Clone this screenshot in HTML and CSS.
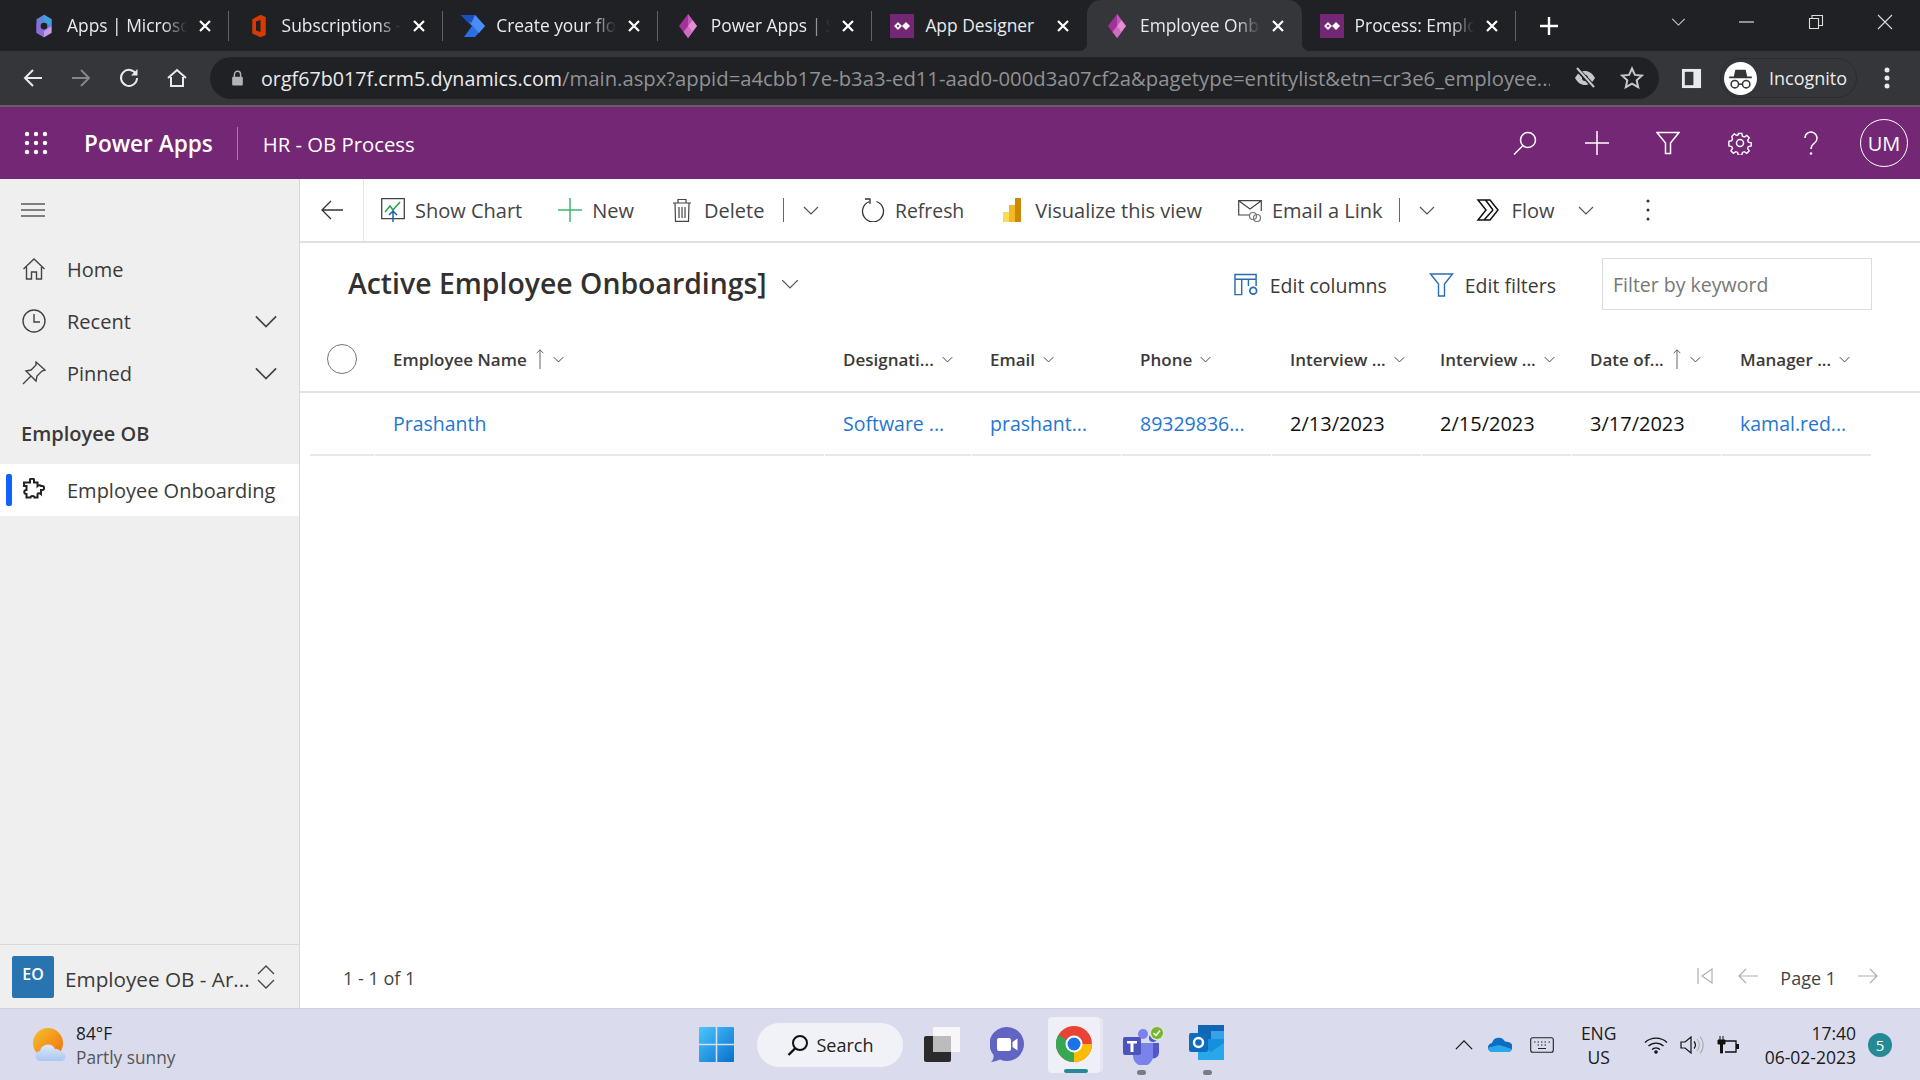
FILE: index.html
```html
<!DOCTYPE html>
<html lang="en">

<head>
    <meta charset="UTF-8">
    <title>Employee Onboarding</title>
    <link rel="stylesheet" href="styles.css">
</head>

<body>
    <svg class="sprite" aria-hidden="true">
        <symbol id="chev" viewBox="0 0 16 9"><path d="M1 1l7 7 7-7" fill="none" stroke="currentColor" stroke-width="1.2"/></symbol>
        <symbol id="tabx" viewBox="0 0 14 14"><path d="M2 2l10 10M12 2L2 12" stroke="currentColor" stroke-width="2.2"/></symbol>
        <symbol id="pa" viewBox="0 0 24 32"><path d="M12 0l12 16-12 16L0 16z" fill="#a4309a"/><path d="M12 0l6 8-6 8z" fill="#c25ab5"/><path d="M12 16l6-8 6 8-12 16z" fill="#e58fd0"/><path d="M12 16l6 8-6 8-6-8z" fill="#d06cc0"/></symbol>
        <symbol id="designer" viewBox="0 0 24 24"><rect width="24" height="24" fill="#742774"/><path d="M8 8l4 4-4 4-4-4zM16 8l4 4-4 4-4-4z" fill="#fff"/><path d="M8 10.5L9.500 12 8 13.500 6.500 12z" fill="#742774"/></symbol>
    </svg>

    <!-- browser tabs -->
    <div class="tabstrip">
        <div class="tab">
            <svg class="favicon" viewBox="0 0 24 32"><path d="M12 1l10 6v18l-10 6-10-6V7z" fill="#6a7fd6"/><path d="M12 1l10 6v9L12 10z" fill="#3aa0e0"/><path d="M2 25V12l10 6v13z" fill="#8d6cd8"/><path d="M22 16v9l-10 6v-8z" fill="#c69be8"/><circle cx="12" cy="16" r="4.500" fill="#202124"/></svg>
            <span class="tab-title">Apps | Microsoft 365</span>
            <svg class="tab-close"><use href="#tabx"/></svg>
        </div>
        <div class="tab">
            <svg class="favicon" viewBox="0 0 20 32"><path d="M1 7l11-6 7 3v24l-7 3-11-5z" fill="#d83b01"/><path d="M6 10l6-2v16l-6-2z" fill="#202124"/></svg>
            <span class="tab-title">Subscriptions - Microsoft</span>
            <svg class="tab-close"><use href="#tabx"/></svg>
        </div>
        <div class="tab">
            <svg class="favicon" viewBox="0 0 24 22"><path d="M0 0h14l10 11-10 11H3l8-11z" fill="#2a6ee8"/><path d="M0 0h14l6 7H6z" fill="#1a4fc0"/><path d="M14 0l10 11-6 7-8-9z" fill="#4c8df5"/></svg>
            <span class="tab-title">Create your flow</span>
            <svg class="tab-close"><use href="#tabx"/></svg>
        </div>
        <div class="tab">
            <svg class="favicon"><use href="#pa"/></svg>
            <span class="tab-title">Power Apps | Sign in</span>
            <svg class="tab-close"><use href="#tabx"/></svg>
        </div>
        <div class="tab tab-before-active">
            <svg class="favicon"><use href="#designer"/></svg>
            <span class="tab-title no-fade">App Designer</span>
            <svg class="tab-close"><use href="#tabx"/></svg>
        </div>
        <div class="tab tab-active">
            <svg class="favicon"><use href="#pa"/></svg>
            <span class="tab-title">Employee Onboarding</span>
            <svg class="tab-close"><use href="#tabx"/></svg>
        </div>
        <div class="tab">
            <svg class="favicon"><use href="#designer"/></svg>
            <span class="tab-title">Process: Employee</span>
            <svg class="tab-close"><use href="#tabx"/></svg>
        </div>
        <svg class="new-tab" viewBox="0 0 18 18"><path d="M9 0v18M0 9h18" stroke="#fff" stroke-width="2.400"/></svg>
        <div class="window-btns">
            <svg class="win-chev"><use href="#chev"/></svg>
            <svg class="win-btn" viewBox="0 0 16 16"><path d="M0 8h15" stroke="#ddd" stroke-width="1.200"/></svg>
            <svg class="win-btn" viewBox="0 0 16 16"><path d="M1.500 4.500h9v10h-9zM4 4.500V1.500h10.500v10h-4" fill="none" stroke="#ddd" stroke-width="1.100"/></svg>
            <svg class="win-btn" viewBox="0 0 16 16"><path d="M1 1l14 14M15 1L1 15" stroke="#ddd" stroke-width="1.100"/></svg>
        </div>
    </div>

    <!-- browser toolbar -->
    <div class="toolbar">
        <svg class="nav-btn" viewBox="0 0 20 20"><path d="M19 10H2M10 2l-8 8 8 8" fill="none" stroke="#e8eaed" stroke-width="2"/></svg>
        <svg class="nav-btn" viewBox="0 0 20 20"><path d="M1 10h17M10 2l8 8-8 8" fill="none" stroke="#83868a" stroke-width="2"/></svg>
        <svg class="nav-btn" viewBox="0 0 20 20"><path d="M17 6a8 8 0 1 0 1 4" fill="none" stroke="#e8eaed" stroke-width="2"/><path d="M18.500 1v6.500H12z" fill="#e8eaed"/></svg>
        <svg class="nav-btn" viewBox="0 0 20 20"><path d="M1 10l9-8 9 8M4 9v9h12V9" fill="none" stroke="#e8eaed" stroke-width="2"/></svg>
        <div class="omnibox">
            <svg class="lock" viewBox="0 0 14 18"><path d="M3.500 8V5a3.500 3.500 0 0 1 7 0v3" fill="none" stroke="#b0b3b8" stroke-width="1.600"/><rect x="1" y="7.500" width="12" height="10" rx="1.500" fill="#b0b3b8"/></svg>
            <span class="url"><span class="url-host">orgf67b017f.crm5.dynamics.com</span>/main.aspx?appid=a4cbb17e-b3a3-ed11-aad0-000d3a07cf2a&amp;pagetype=entitylist&amp;etn=cr3e6_employee...</span>
            <svg class="omni-icon" viewBox="0 0 24 22"><path d="M2 11c3-5 6-7 10-7s7 2 10 7c-3 5-6 7-10 7s-7-2-10-7z" fill="#c4c7cb"/><circle cx="12" cy="11" r="3" fill="#202124"/><path d="M4 2l17 18" stroke="#202124" stroke-width="4.500"/><path d="M4 1l17 19" stroke="#c4c7cb" stroke-width="2"/></svg>
            <svg class="omni-icon" viewBox="0 0 24 24"><path d="M12 2.500l2.900 6.400 7 .7-5.200 4.700 1.500 6.900-6.200-3.600-6.200 3.600 1.500-6.900-5.200-4.700 7-.7z" fill="none" stroke="#c4c7cb" stroke-width="2"/></svg>
        </div>
        <svg class="side-panel" viewBox="0 0 22 22"><rect x="1" y="1" width="20" height="20" fill="#e8eaed"/><rect x="4" y="4" width="9" height="14" fill="#35363a"/></svg>
        <div class="incognito">
            <span class="incognito-face">
                <svg viewBox="0 0 32 32"><path d="M9.500 14l1.500-6.500h10l1.500 6.500zM5 14h22v1.800H5z" fill="#35363a"/><circle cx="10.500" cy="21.500" r="3.600" fill="none" stroke="#35363a" stroke-width="1.500"/><circle cx="21.500" cy="21.500" r="3.600" fill="none" stroke="#35363a" stroke-width="1.500"/><path d="M14 21.500h4" stroke="#35363a" stroke-width="1.500"/></svg>
            </span>
            Incognito
        </div>
        <svg class="menu-dots" viewBox="0 0 6 24"><circle cx="3" cy="4" r="2.500" fill="#e8eaed"/><circle cx="3" cy="12" r="2.500" fill="#e8eaed"/><circle cx="3" cy="20" r="2.500" fill="#e8eaed"/></svg>
    </div>

    <!-- app header -->
    <header class="app-bar">
        <svg class="waffle" viewBox="0 0 24 24"><g fill="#fff"><circle cx="3" cy="3" r="2.200"/><circle cx="12" cy="3" r="2.200"/><circle cx="21" cy="3" r="2.200"/><circle cx="3" cy="12" r="2.200"/><circle cx="12" cy="12" r="2.200"/><circle cx="21" cy="12" r="2.200"/><circle cx="3" cy="21" r="2.200"/><circle cx="12" cy="21" r="2.200"/><circle cx="21" cy="21" r="2.200"/></g></svg>
        <span class="brand">Power Apps</span>
        <span class="app-name">HR - OB Process</span>
        <div class="app-actions">
            <button class="app-btn"><svg viewBox="0 0 24 24"><circle cx="15" cy="9" r="7.500" fill="none" stroke="#fff" stroke-width="1.500"/><path d="M10 14.500L1 23.500" stroke="#fff" stroke-width="1.500"/></svg></button>
            <button class="app-btn"><svg viewBox="0 0 24 24"><path d="M12 0v24M0 12h24" stroke="#fff" stroke-width="1.500"/></svg></button>
            <button class="app-btn"><svg viewBox="0 0 24 24"><path d="M1 1.500h22L14.500 12v10.500h-5V12z" fill="none" stroke="#fff" stroke-width="1.500"/></svg></button>
            <button class="app-btn"><svg viewBox="0 0 24 24"><circle cx="12" cy="12" r="3.500" fill="none" stroke="#fff" stroke-width="1.500"/><path d="M10 1h4l.7 3.200 2.100.9 2.800-1.800 2.800 2.800-1.800 2.800.9 2.100 3.200.7v3.500l-3.200.7-.9 2.100 1.800 2.800-2.800 2.800-2.800-1.800-2.100.9-.7 3.200h-4l-.7-3.200-2.100-.9-2.800 1.800-2.800-2.800 1.800-2.800-.9-2.100-3.200-.7V10l3.200-.7.900-2.100L2.600 4.400l2.800-2.800 2.800 1.800 2.100-.9z" transform="translate(1.500 1.500) scale(.88)" fill="none" stroke="#fff" stroke-width="1.600"/></svg></button>
            <button class="app-btn"><svg viewBox="0 0 24 24"><path d="M6 7a6 6 0 1 1 9.500 5c-2 1.400-3.500 2.500-3.500 6" fill="none" stroke="#fff" stroke-width="1.500"/><circle cx="12" cy="22.500" r="1.200" fill="#fff"/></svg></button>
            <span class="avatar">UM</span>
        </div>
    </header>

    <div class="workspace">
        <!-- left navigation -->
        <nav class="sidebar">
            <svg class="hamburger" viewBox="0 0 24 14"><path d="M0 1h24M0 7h24M0 13h24" stroke="#111" stroke-width="1.200"/></svg>
            <ul class="nav-list">
                <li class="nav-item">
                    <svg class="nav-icon" viewBox="0 0 24 24"><path d="M1.500 12L12 2l10.500 10M4.500 10v12h5v-7h5v7h5V10" fill="none" stroke="#444" stroke-width="1.400"/></svg>
                    <span>Home</span>
                </li>
                <li class="nav-item">
                    <svg class="nav-icon" viewBox="0 0 24 24"><circle cx="12" cy="12" r="11" fill="none" stroke="#444" stroke-width="1.400"/><path d="M12 5v8h6" fill="none" stroke="#444" stroke-width="1.400"/></svg>
                    <span>Recent</span>
                    <svg class="nav-chev"><use href="#chev"/></svg>
                </li>
                <li class="nav-item">
                    <svg class="nav-icon" viewBox="0 0 24 24"><path d="M14 1l9 8-3 1-5 5-1 5-3-3-4-4-3-3 5-1 5-5zM8.500 15.500L1 23" fill="none" stroke="#444" stroke-width="1.400"/></svg>
                    <span>Pinned</span>
                    <svg class="nav-chev"><use href="#chev"/></svg>
                </li>
            </ul>
            <div class="nav-group">Employee OB</div>
            <div class="nav-item nav-current">
                <svg class="nav-icon" viewBox="0 0 24 24"><path d="M8 1.500c0-1 4-1 4 0V4.500h3.500V8h0c1-1 3-1 3.500 0h1.500c2 0 2 4 0 4h-1.500V16c-1-1-3.500-1-3.500 0v3.500h-3c0-2-4-2-4 0H4.500V16c-3 0-3-4 0-4V8H2V4.500h6z" fill="none" stroke="#222" stroke-width="2"/></svg>
                <span>Employee Onboarding</span>
            </div>
            <div class="area-switch">
                <span class="area-tile">EO</span>
                <span class="area-name">Employee OB - Ar...</span>
                <svg class="area-chev" viewBox="0 0 18 26"><path d="M1 10l8-8 8 8M1 16l8 8 8-8" fill="none" stroke="#444" stroke-width="1.300"/></svg>
            </div>
        </nav>

        <main class="content">
            <!-- command bar -->
            <div class="cmdbar">
                <button class="cmd-back"><svg viewBox="0 0 22 20"><path d="M22 10H1M10 1l-9 9 9 9" fill="none" stroke="#333" stroke-width="1.300"/></svg></button>
                <div class="cmd-list">
                    <span class="cmd">
                        <svg class="cmd-icon" viewBox="0 0 24 24"><path d="M.7 .7h22.600v20H.7z" fill="none" stroke="#444" stroke-width="1.300"/><path d="M4 14l5-6 3 4 7-8" fill="none" stroke="#2aa34a" stroke-width="1.500"/><path d="M12 24V13M8 17l4-4 4 4" fill="none" stroke="#1565b0" stroke-width="1.500"/></svg>
                        Show Chart
                    </span>
                    <span class="cmd">
                        <svg class="cmd-icon" viewBox="0 0 24 24"><path d="M12 0v24M0 12h24" stroke="#3fb56e" stroke-width="1.500"/></svg>
                        New
                    </span>
                    <span class="cmd cmd-delete">
                        <svg class="cmd-icon" viewBox="0 0 24 24"><path d="M3 5h18M8 5V1.500h8V5M5 5l.5 18.300h13L19 5M9 9v11M12 9v11M15 9v11" fill="none" stroke="#444" stroke-width="1.200"/></svg>
                        Delete
                    </span>
                    <span class="cmd-split"><svg class="cmd-chev"><use href="#chev"/></svg></span>
                    <span class="cmd cmd-refresh">
                        <svg class="cmd-icon" viewBox="0 0 24 24"><path d="M15.500 3.500a10.500 10.500 0 1 1-7 0" fill="none" stroke="#333" stroke-width="1.300"/><path d="M4 1h5v5" fill="none" stroke="#333" stroke-width="1.300"/></svg>
                        Refresh
                    </span>
                    <span class="cmd">
                        <svg class="cmd-icon cmd-icon-bi" viewBox="0 0 18 24"><rect x="0" y="14" width="6" height="10" fill="#f6dd58"/><rect x="6" y="7" width="6" height="17" fill="#f2b922"/><rect x="12" y="0" width="6" height="24" fill="#c98a0a"/></svg>
                        Visualize this view
                    </span>
                    <span class="cmd cmd-email">
                        <svg class="cmd-icon" viewBox="0 0 24 24"><path d="M12 17H.7V2.700h22.600V13M.7 2.700L12 11l11.300-8.300" fill="none" stroke="#444" stroke-width="1.200"/><circle cx="15" cy="18" r="3.500" fill="none" stroke="#777" stroke-width="1.200"/><circle cx="19" cy="20" r="3.500" fill="none" stroke="#777" stroke-width="1.200"/></svg>
                        Email a Link
                    </span>
                    <span class="cmd-split cmd-split-last"><svg class="cmd-chev"><use href="#chev"/></svg></span>
                    <span class="cmd cmd-flow">
                        <svg class="cmd-icon" viewBox="0 0 24 24"><path d="M2 2h12l8 10-8 10H2l8-10zM8 22l9-10M9.500 2l7.500 10" fill="none" stroke="#111" stroke-width="1.500"/></svg>
                        Flow
                        <svg class="cmd-chev flow-chev"><use href="#chev"/></svg>
                    </span>
                    <svg class="cmd-more" viewBox="0 0 4 24"><circle cx="2" cy="3" r="1.500" fill="#333"/><circle cx="2" cy="12" r="1.500" fill="#333"/><circle cx="2" cy="21" r="1.500" fill="#333"/></svg>
                </div>
            </div>

            <!-- view title -->
            <div class="view-bar">
                <h1 class="view-title">Active Employee Onboardings]</h1>
                <svg class="view-chev"><use href="#chev"/></svg>
                <span class="view-action view-columns">
                    <svg class="view-icon" viewBox="0 0 26 24"><path d="M1 17V1h22v12M1 6h22M8 6v16H1v-5M15 6v7" fill="none" stroke="#2b6cb0" stroke-width="1.500"/><circle cx="20" cy="18" r="3.500" fill="none" stroke="#2b6cb0" stroke-width="1.800"/></svg>
                    Edit columns
                </span>
                <span class="view-action">
                    <svg class="view-icon" viewBox="0 0 24 24"><path d="M1 1h22l-8 10v12H9V11z" fill="none" stroke="#2b6cb0" stroke-width="1.400"/></svg>
                    Edit filters
                </span>
                <div class="keyword">Filter by keyword</div>
            </div>

            <!-- grid -->
            <div class="grid grid-head">
                <span class="pick"></span>
                <span class="col">Employee Name <svg class="sort" viewBox="0 0 10 24"><path d="M5 24V1M1 5l4-4 4 4" fill="none" stroke="#555" stroke-width="1.100"/></svg><svg class="col-chev"><use href="#chev"/></svg></span>
                <span class="col">Designati... <svg class="col-chev"><use href="#chev"/></svg></span>
                <span class="col">Email <svg class="col-chev"><use href="#chev"/></svg></span>
                <span class="col">Phone <svg class="col-chev"><use href="#chev"/></svg></span>
                <span class="col">Interview ... <svg class="col-chev"><use href="#chev"/></svg></span>
                <span class="col">Interview ... <svg class="col-chev"><use href="#chev"/></svg></span>
                <span class="col">Date of... <svg class="sort" viewBox="0 0 10 24"><path d="M5 24V1M1 5l4-4 4 4" fill="none" stroke="#555" stroke-width="1.100"/></svg><svg class="col-chev"><use href="#chev"/></svg></span>
                <span class="col">Manager ... <svg class="col-chev"><use href="#chev"/></svg></span>
            </div>
            <div class="grid grid-row">
                <span class="cell"></span>
                <a class="cell link">Prashanth</a>
                <a class="cell link">Software ...</a>
                <a class="cell link">prashant...</a>
                <a class="cell link">89329836...</a>
                <span class="cell">2/13/2023</span>
                <span class="cell">2/15/2023</span>
                <span class="cell">3/17/2023</span>
                <a class="cell link">kamal.red...</a>
            </div>

            <!-- footer -->
            <div class="list-foot">
                <span class="count">1 - 1 of 1</span>
                <div class="pager">
                    <svg class="pager-first" viewBox="0 0 16 16"><path d="M1 0v16M15 1v14L5 8z" fill="none" stroke="#b0b0b0" stroke-width="1.200"/></svg>
                    <svg class="pager-arrow" viewBox="0 0 20 16"><path d="M20 8H1M8 1L1 8l7 7" fill="none" stroke="#b0b0b0" stroke-width="1.200"/></svg>
                    <span class="page-label">Page 1</span>
                    <svg class="pager-arrow" viewBox="0 0 20 16"><path d="M0 8h19M12 1l7 7-7 7" fill="none" stroke="#b0b0b0" stroke-width="1.200"/></svg>
                </div>
            </div>
        </main>
    </div>

    <!-- windows taskbar -->
    <footer class="taskbar">
        <div class="weather">
            <svg class="weather-icon" viewBox="0 0 34 34">
                <defs>
                    <linearGradient id="sun" x1="0" y1="0" x2="1" y2="1"><stop offset="0" stop-color="#f7c12d"/><stop offset="1" stop-color="#ee6f0c"/></linearGradient>
                    <linearGradient id="cloud" x1="0" y1="0" x2="0" y2="1"><stop offset="0" stop-color="#dfe8fb"/><stop offset="1" stop-color="#a9c6f2"/></linearGradient>
                </defs>
                <circle cx="15" cy="15" r="15" fill="url(#sun)"/>
                <path d="M8 33a5 5 0 0 1-1-10 8 8 0 0 1 15-2 6 6 0 0 1 6 3 4.500 4.500 0 0 1 0 9z" fill="url(#cloud)"/>
            </svg>
            <div class="weather-text">
                <span class="weather-temp">84°F</span>
                <span class="weather-desc">Partly sunny</span>
            </div>
        </div>

        <div class="task-apps">
            <svg class="task-start" viewBox="0 0 35 35">
                <defs><linearGradient id="win" x1="0" y1="0" x2="1" y2="1"><stop offset="0" stop-color="#4cc6fb"/><stop offset="1" stop-color="#0670cf"/></linearGradient></defs>
                <path d="M0 1a1 1 0 0 1 1-1h15.700v16.700H0zM18.300 0H34a1 1 0 0 1 1 1v15.700H18.300zM0 18.300h16.700V35H1a1 1 0 0 1-1-1zM18.300 18.300H35V34a1 1 0 0 1-1 1H18.300z" fill="url(#win)"/>
            </svg>
            <div class="task-search">
                <svg viewBox="0 0 22 22"><circle cx="13" cy="9" r="7" fill="none" stroke="#111" stroke-width="2"/><path d="M8 14.500L1.500 21" stroke="#111" stroke-width="2.400"/></svg>
                Search
            </div>
            <svg class="task-icon task-view" viewBox="0 0 36 36"><rect x="9" y="0" width="27" height="25" rx="1" fill="#f7f7fa"/><rect y="9" width="27" height="26" rx="2" fill="#2b2b2b"/><rect x="9" y="9" width="18" height="16" fill="#bcbcbc"/></svg>
            <svg class="task-icon task-meet" viewBox="0 0 34 36"><path d="M17 0a17 17 0 1 1-7 32.500C7 34 3 35 1 35c2-2 3-4 2.500-7A17 17 0 0 1 17 0z" fill="#6264c4"/><rect x="7" y="11" width="14" height="13" rx="2" fill="#fff"/><path d="M22.500 15l5-3.500v12l-5-3.500z" fill="#fff"/></svg>
            <div class="task-chrome">
                <svg viewBox="0 0 36 36">
                    <circle cx="18" cy="18" r="18" fill="#ea4335"/>
                    <path d="M18 18L2.400 9A18 18 0 0 0 18 36z" fill="#34a853"/>
                    <path d="M18 18h18A18 18 0 0 1 18 36z" fill="#fbbc04"/>
                    <circle cx="18" cy="18" r="8.500" fill="#fff"/>
                    <circle cx="18" cy="18" r="6.500" fill="#1a73e8"/>
                </svg>
                <span class="chrome-mark"></span>
            </div>
            <div class="task-running">
                <svg viewBox="0 0 44 40"><circle cx="20" cy="9" r="5" fill="#7b83eb"/><circle cx="30" cy="13" r="4" fill="#5059c9"/><path d="M25 18h11v10a6 6 0 0 1-8 5z" fill="#5059c9"/><path d="M10 18h20v13a10 10 0 0 1-20 0z" fill="#7b83eb"/><rect y="12" width="18" height="18" rx="2" fill="#4b53bc"/><path d="M4 16h10v2.500h-3.500V27h-3v-8.500H4z" fill="#fff"/><circle cx="34" cy="8" r="7.500" fill="#dfe3d5"/><circle cx="34" cy="8" r="6" fill="#74b72e"/><path d="M30.500 8l2.500 2.500 4-5" fill="none" stroke="#fff" stroke-width="1.500"/></svg>
                <span class="run-dot"></span>
            </div>
            <div class="task-running task-outlook">
                <svg viewBox="0 0 36 36"><rect x="9" y="0" width="26" height="18" fill="#1066b5"/><rect x="22" y="6" width="13" height="12" fill="#35a2ea"/><path d="M9 14h26v20a1 1 0 0 1-1 1H10a1 1 0 0 1-1-1z" fill="#1490df"/><path d="M9 18l13 9 13-9v17H9z" fill="#28a8ea"/><rect y="8" width="19" height="19" rx="2" fill="#0f6cbd"/><circle cx="9.500" cy="17.500" r="4.500" fill="none" stroke="#fff" stroke-width="2.400"/></svg>
                <span class="run-dot"></span>
            </div>
        </div>

        <div class="tray">
            <svg class="tray-caret" viewBox="0 0 20 11"><path d="M1 10l9-9 9 9" fill="none" stroke="#111" stroke-width="1.300"/></svg>
            <svg class="tray-cloud" viewBox="0 0 24 16"><path d="M5 15a4.500 4.500 0 0 1-1-9 7 7 0 0 1 13-1.500 5.500 5.500 0 0 1 3 .500A5 5 0 0 1 19 15z" fill="#0f6cc5"/><path d="M5 15c-3 0-5-2-4.500-4.500L11 8l13 4c-.500 2-2 3-4.500 3z" fill="#28a8ea"/></svg>
            <svg class="tray-keys" viewBox="0 0 24 16"><rect x=".7" y=".7" width="22.600" height="14.600" rx="2" fill="none" stroke="#222" stroke-width="1.100"/><path d="M4 5h1.500M7.500 5H9M11 5h1.500M14.500 5H16M18.500 5H20M7.500 8H9M11 8h1.500M14.500 8H16M8 11.500h8" stroke="#222" stroke-width="1.200"/></svg>
            <div class="tray-lang">ENG<br>US</div>
            <svg class="tray-wifi" viewBox="0 0 24 18"><path d="M1 6.500a16 16 0 0 1 22 0M4.500 10a11 11 0 0 1 15 0M8 13.500a6 6 0 0 1 8 0" fill="none" stroke="#111" stroke-width="1.300"/><circle cx="12" cy="16" r="1.800" fill="#111"/></svg>
            <svg class="tray-sound" viewBox="0 0 24 20"><path d="M1 7h4l6-5v16l-6-5H1z" fill="none" stroke="#111" stroke-width="1.200"/><path d="M14 6.500a5 5 0 0 1 0 7" fill="none" stroke="#111" stroke-width="1.200"/><path d="M17 4a9 9 0 0 1 0 12M20 1.500a13 13 0 0 1 0 17" fill="none" stroke="#aaa" stroke-width="1.100"/></svg>
            <svg class="tray-power" viewBox="0 0 24 18"><path d="M8 5h11v11H8" fill="none" stroke="#111" stroke-width="1.300"/><rect x="19" y="8" width="3" height="5" fill="#111"/><path d="M1 4h7v4H5.500v9H3.500V8H1zM3 0v4M6 0v4" fill="#111" stroke="#111"/></svg>
            <div class="tray-clock">17:40<br>06-02-2023</div>
            <span class="tray-badge">5</span>
        </div>
    </footer>
</body>

</html>
```

FILE: styles.css
```css
/* page */
* {
    box-sizing: border-box;
}

body {
    margin: 0;
    height: 100vh;
    display: flex;
    flex-direction: column;
    overflow: hidden;
    font-family: "Open Sans", "Noto Sans", sans-serif;
    color: #323130;
    background: #fff;
}

.sprite {
    display: none;
}

button {
    border: none;
    background: none;
    padding: 0;
}

/* browser tabs */
.tabstrip {
    height: 51px;
    flex: none;
    display: flex;
    align-items: center;
    padding-left: 14px;
    background: #202124;
    color: #e8eaed;
    font-size: 17.4px;
}

.tab {
    position: relative;
    width: 214.6px;
    height: 100%;
    flex: none;
    display: flex;
    align-items: center;
    padding-left: 18px;
    padding-right: 17px;
}

.tab::after {
    content: "";
    position: absolute;
    right: 0;
    top: 11px;
    height: 30px;
    width: 1px;
    background: #5f6368;
}

.tab-active {
    background: #35363a;
    border-radius: 14px 14px 0 0;
}

.tab-active::before,
.tab-active::after {
    content: "";
    position: absolute;
    top: auto;
    bottom: 0;
    width: 8px;
    height: 8px;
    background: radial-gradient(circle at 0 0, transparent 8px, #35363a 8.5px);
}

.tab-active::before {
    left: -8px;
}

.tab-active::after {
    right: -8px;
    background: radial-gradient(circle at 100% 0, transparent 8px, #35363a 8.5px);
}

.tab-before-active::after {
    display: none;
}

.favicon {
    width: 24px;
    height: 24px;
    flex: none;
}

.tab-title {
    flex: 1;
    min-width: 0;
    margin-left: 11px;
    margin-right: 11px;
    padding-bottom: 2px;
    white-space: nowrap;
    overflow: hidden;
    -webkit-mask-image: linear-gradient(to right, #000 80%, transparent 100%);
    mask-image: linear-gradient(to right, #000 80%, transparent 100%);
}

.no-fade {
    -webkit-mask-image: none;
    mask-image: none;
}

.tab-close {
    width: 14px;
    height: 14px;
    flex: none;
    color: #fff;
}

.new-tab {
    width: 18px;
    height: 18px;
    margin-left: 24px;
}

.window-btns {
    margin-left: auto;
    display: flex;
    align-items: center;
    gap: 53px;
    padding: 0 27px 8px 0;
}

.win-chev {
    width: 15px;
    height: 8px;
    color: #ccc;
}

.win-btn {
    width: 16px;
    height: 16px;
}

/* browser toolbar */
.toolbar {
    height: 56px;
    flex: none;
    display: flex;
    align-items: center;
    padding-left: 23px;
    background: #35363a;
    border-bottom: 2px solid #5f6164;
}

.nav-btn {
    width: 20px;
    height: 20px;
    margin-right: 28px;
    flex: none;
}

.omnibox {
    width: 1449px;
    height: 42px;
    margin-left: -5px;
    flex: none;
    display: flex;
    align-items: center;
    padding: 0 15px 0 21px;
    border-radius: 21px;
    background: #202124;
}

.lock {
    width: 13px;
    height: 16px;
    flex: none;
}

.url {
    flex: 1;
    min-width: 0;
    margin-left: 17px;
    font-size: 20.28px;
    white-space: nowrap;
    overflow: hidden;
    color: #8f9296;
}

.url-host {
    font-size: 19.7px;
    color: #e8eaed;
}

.omni-icon {
    width: 24px;
    height: 24px;
    margin-left: 23px;
    flex: none;
}

.side-panel {
    width: 21px;
    height: 21px;
    margin-left: 22px;
    flex: none;
}

.incognito {
    width: 137px;
    height: 40px;
    margin-left: 18px;
    flex: none;
    display: flex;
    align-items: center;
    gap: 12px;
    padding-left: 3px;
    border-radius: 20px;
    border: 1px solid #2a2b2e;
    color: #e8eaed;
    font-size: 18px;
}

.incognito-face {
    width: 33px;
    height: 33px;
    border-radius: 50%;
    background: #fff;
    display: flex;
    flex: none;
}

.menu-dots {
    width: 6px;
    height: 24px;
    margin-left: 27px;
    flex: none;
}

/* app header */
.app-bar {
    height: 72px;
    flex: none;
    display: flex;
    align-items: center;
    padding-left: 24px;
    background: #742774;
    color: #fff;
}

.waffle {
    width: 24px;
    height: 24px;
}

.brand {
    margin-left: 36px;
    padding-right: 24px;
    padding-top: 1px;
    border-right: 1px solid #a87aa8;
    font-size: 22.6px;
    font-weight: 600;
    line-height: 32px;
}

.app-name {
    margin-left: 25px;
    padding-top: 2px;
    font-size: 20.3px;
}

.app-actions {
    margin-left: auto;
    display: flex;
    align-items: center;
    padding-right: 12px;
}

.app-btn {
    width: 71.5px;
    height: 72px;
    display: flex;
    align-items: center;
    justify-content: center;
}

.app-btn svg {
    width: 24px;
    height: 24px;
}

.avatar {
    width: 48px;
    height: 48px;
    margin-left: 13px;
    border: 1px solid #fff;
    border-radius: 50%;
    display: flex;
    align-items: center;
    justify-content: center;
    font-size: 20px;
}

/* layout below the header */
.workspace {
    flex: 1;
    min-height: 0;
    display: flex;
}

/* left navigation */
.sidebar {
    width: 300px;
    flex: none;
    display: flex;
    flex-direction: column;
    background: #efefef;
    border-right: 1px solid #d8d8d8;
    font-size: 20px;
    color: #3b3a39;
}

.hamburger {
    width: 24px;
    height: 14px;
    margin: 24px 0 0 21px;
    flex: none;
}

.nav-list {
    list-style: none;
    margin: 26px 0 0;
    padding: 0;
}

.nav-item {
    height: 52px;
    display: flex;
    align-items: center;
    padding-left: 22px;
}

.nav-icon {
    width: 24px;
    height: 24px;
    margin-right: 21px;
    flex: none;
}

.nav-chev {
    width: 24px;
    height: 13px;
    margin-left: auto;
    margin-right: 21px;
    color: #444;
}

.nav-group {
    margin-top: 11px;
    padding-left: 21px;
    height: 54px;
    line-height: 47px;
    font-weight: 600;
}

.nav-current {
    position: relative;
    background: #fff;
}

.nav-current::before {
    content: "";
    position: absolute;
    left: 6px;
    top: 10px;
    width: 6px;
    height: 32px;
    border-radius: 2px;
    background: #0f62fe;
}

.area-switch {
    margin-top: auto;
    height: 64px;
    flex: none;
    display: flex;
    align-items: center;
    padding-left: 12px;
    border-top: 1px solid #d8d8d8;
}

.area-tile {
    width: 42px;
    height: 42px;
    border-radius: 2px;
    background: #2874b0;
    color: #fff;
    font-size: 16px;
    font-weight: 600;
    text-align: center;
    line-height: 36px;
    flex: none;
}

.area-name {
    margin-left: 11px;
    padding-top: 4px;
    white-space: nowrap;
    font-size: 20.7px;
}

.area-chev {
    width: 18px;
    height: 26px;
    margin-left: 7px;
}

/* main area */
.content {
    flex: 1;
    min-width: 0;
    display: flex;
    flex-direction: column;
}

.cmdbar {
    height: 64px;
    flex: none;
    display: flex;
    border-bottom: 2px solid #e1e1e1;
    font-size: 20px;
    color: #444;
}

.cmd-back {
    width: 64px;
    flex: none;
    border-right: 1px solid #e5e5e5;
    display: flex;
    align-items: center;
    justify-content: center;
}

.cmd-back svg {
    width: 22px;
    height: 20px;
}

.cmd-list {
    display: flex;
    align-items: center;
    gap: 36px;
    padding-left: 17px;
}

.cmd {
    display: flex;
    align-items: center;
    gap: 10px;
    white-space: nowrap;
}

.cmd-refresh {
    margin-right: 3px;
    font-size: 19.4px;
}

.cmd-flow {
    gap: 12px;
}

.cmd-icon {
    width: 24px;
    height: 24px;
    flex: none;
}

.cmd-icon-bi {
    width: 18px;
    margin-right: 4px;
}

.cmd-split {
    height: 24px;
    width: 54.5px;
    margin-left: -17px;
    margin-right: -13px;
    border-left: 1px solid #666;
    display: flex;
    align-items: center;
    padding-left: 19px;
}

.cmd-split-last {
    width: 54px;
    margin-left: -20px;
}

.cmd-chev {
    width: 16px;
    height: 9px;
    color: #555;
    flex: none;
}

.flow-chev {
    margin-left: 11px;
}

.cmd-more {
    width: 4px;
    height: 24px;
    margin-left: 16px;
}

/* view title row */
.view-bar {
    height: 88px;
    flex: none;
    display: flex;
    align-items: center;
    padding: 0 48px 6px 48px;
}

.view-title {
    margin: 0 0 2px;
    font-size: 28.4px;
    font-weight: 600;
    color: #323130;
    white-space: nowrap;
}

.view-chev {
    width: 18px;
    height: 10px;
    margin-left: 14px;
    color: #555;
}

.view-action {
    display: flex;
    align-items: center;
    gap: 11px;
    padding-top: 2px;
    font-size: 19.5px;
    color: #3b3a39;
    white-space: nowrap;
}

.view-columns {
    margin-left: auto;
    margin-right: 42px;
}

.view-icon {
    width: 25px;
    height: 24px;
    flex: none;
}

.keyword {
    width: 270px;
    height: 52px;
    margin-left: 46px;
    flex: none;
    padding-left: 10px;
    border: 1px solid #ddd;
    font-size: 19.5px;
    line-height: 52px;
    color: #777;
}

/* grid */
.grid {
    flex: none;
    display: grid;
    grid-template-columns: 65px 450px 147px repeat(6, 150px);
    padding-left: 10px;
}

.grid-head {
    height: 62px;
    align-items: center;
    padding-bottom: 4px;
    border-bottom: 2px solid #e4e4e4;
    font-size: 17px;
    font-weight: 600;
    color: #3b3a39;
}

.pick {
    width: 30px;
    height: 30px;
    margin-left: 17px;
    border: 1px solid #777;
    border-radius: 50%;
}

.col {
    display: flex;
    align-items: center;
    padding-left: 18px;
    white-space: nowrap;
}

.sort {
    width: 10px;
    height: 20px;
    margin-left: 8px;
}

.col-chev {
    width: 11px;
    height: 7px;
    margin-left: 8px;
    color: #222;
}

.grid-row {
    height: 63px;
    font-size: 20px;
}

.cell {
    margin-right: 1px;
    padding-left: 18px;
    border-bottom: 2px solid #e8e8e8;
    line-height: 62px;
    white-space: nowrap;
    overflow: hidden;
    color: #111;
}

.link {
    font-size: 19.5px;
    color: #1f76d2;
}

/* footer */
.list-foot {
    margin-top: auto;
    height: 64px;
    flex: none;
    display: flex;
    align-items: center;
    padding: 0 42px 0 43px;
    font-size: 18px;
    color: #444;
}

.count {
    padding-top: 4px;
}

.pager {
    margin-left: auto;
    display: flex;
    align-items: center;
    gap: 22px;
}

.pager-first {
    width: 16px;
    height: 16px;
    margin-right: 3px;
}

.pager-arrow {
    width: 20px;
    height: 16px;
}

.page-label {
    color: #444;
    margin-top: 4px;
}

/* windows taskbar */
.taskbar {
    height: 72px;
    flex: none;
    display: flex;
    align-items: center;
    border-top: 1px solid #cfd1de;
    background: #dadced;
    color: #1a1a1a;
}

.weather {
    width: 699px;
    flex: none;
    display: flex;
    align-items: center;
    padding-left: 33px;
}

.weather-icon {
    width: 34px;
    height: 34px;
    flex: none;
}

.weather-text {
    margin-left: 9px;
    padding-top: 2px;
    display: flex;
    flex-direction: column;
    line-height: 24px;
    font-size: 17.3px;
}

.weather-desc {
    color: #555;
}

.task-apps {
    display: flex;
    align-items: center;
}

.task-start {
    width: 35px;
    height: 35px;
    flex: none;
}

.task-search {
    width: 146px;
    height: 44px;
    margin-left: 23px;
    flex: none;
    display: flex;
    align-items: center;
    justify-content: center;
    gap: 8px;
    border-radius: 22px;
    background: #f1f2f8;
    font-size: 18px;
    color: #222;
}

.task-search svg {
    width: 22px;
    height: 22px;
}

.task-icon {
    flex: none;
}

.task-view {
    width: 36px;
    height: 36px;
    margin-left: 21px;
}

.task-meet {
    width: 34px;
    height: 36px;
    margin-left: 30px;
}

.task-chrome {
    position: relative;
    width: 52px;
    height: 56px;
    margin-left: 24px;
    flex: none;
    display: flex;
    align-items: center;
    justify-content: center;
    padding-bottom: 2px;
    border-radius: 4px;
    background: #eff0f7;
    box-shadow: 4px 0 0 -1px #e6e7f2;
}

.task-chrome svg {
    width: 36px;
    height: 36px;
}

.chrome-mark {
    position: absolute;
    left: 16px;
    bottom: 0;
    width: 24px;
    height: 4px;
    border-radius: 2px;
    background: #258a96;
}

.task-running {
    position: relative;
    width: 44px;
    height: 40px;
    margin-left: 23px;
    flex: none;
}

.task-running svg {
    width: 44px;
    height: 40px;
}

.task-outlook {
    width: 36px;
    margin-left: 22px;
}

.task-outlook svg {
    width: 36px;
    height: 36px;
}

.run-dot {
    position: absolute;
    left: 14px;
    bottom: -10px;
    width: 9px;
    height: 5px;
    border-radius: 3px;
    background: #7b7b85;
}

.tray {
    margin-left: auto;
    display: flex;
    align-items: center;
    padding-right: 28px;
}

.tray-caret {
    width: 18px;
    height: 10px;
}

.tray-cloud {
    width: 24px;
    height: 16px;
    margin-left: 15px;
}

.tray-keys {
    width: 24px;
    height: 16px;
    margin-left: 18px;
}

.tray-lang {
    width: 60px;
    margin-left: 15px;
    text-align: center;
    font-size: 17.5px;
    line-height: 24px;
}

.tray-wifi {
    width: 24px;
    height: 18px;
    margin-left: 15px;
}

.tray-sound {
    width: 24px;
    height: 20px;
    margin-left: 12px;
}

.tray-power {
    width: 24px;
    height: 18px;
    margin-left: 13px;
}

.tray-clock {
    margin-left: 24px;
    text-align: right;
    font-size: 17.5px;
    line-height: 24px;
    white-space: nowrap;
}

.tray-badge {
    width: 24px;
    height: 24px;
    margin-left: 12px;
    border-radius: 50%;
    background: #258a96;
    color: #fff;
    font-size: 15px;
    text-align: center;
    line-height: 24px;
}
```
